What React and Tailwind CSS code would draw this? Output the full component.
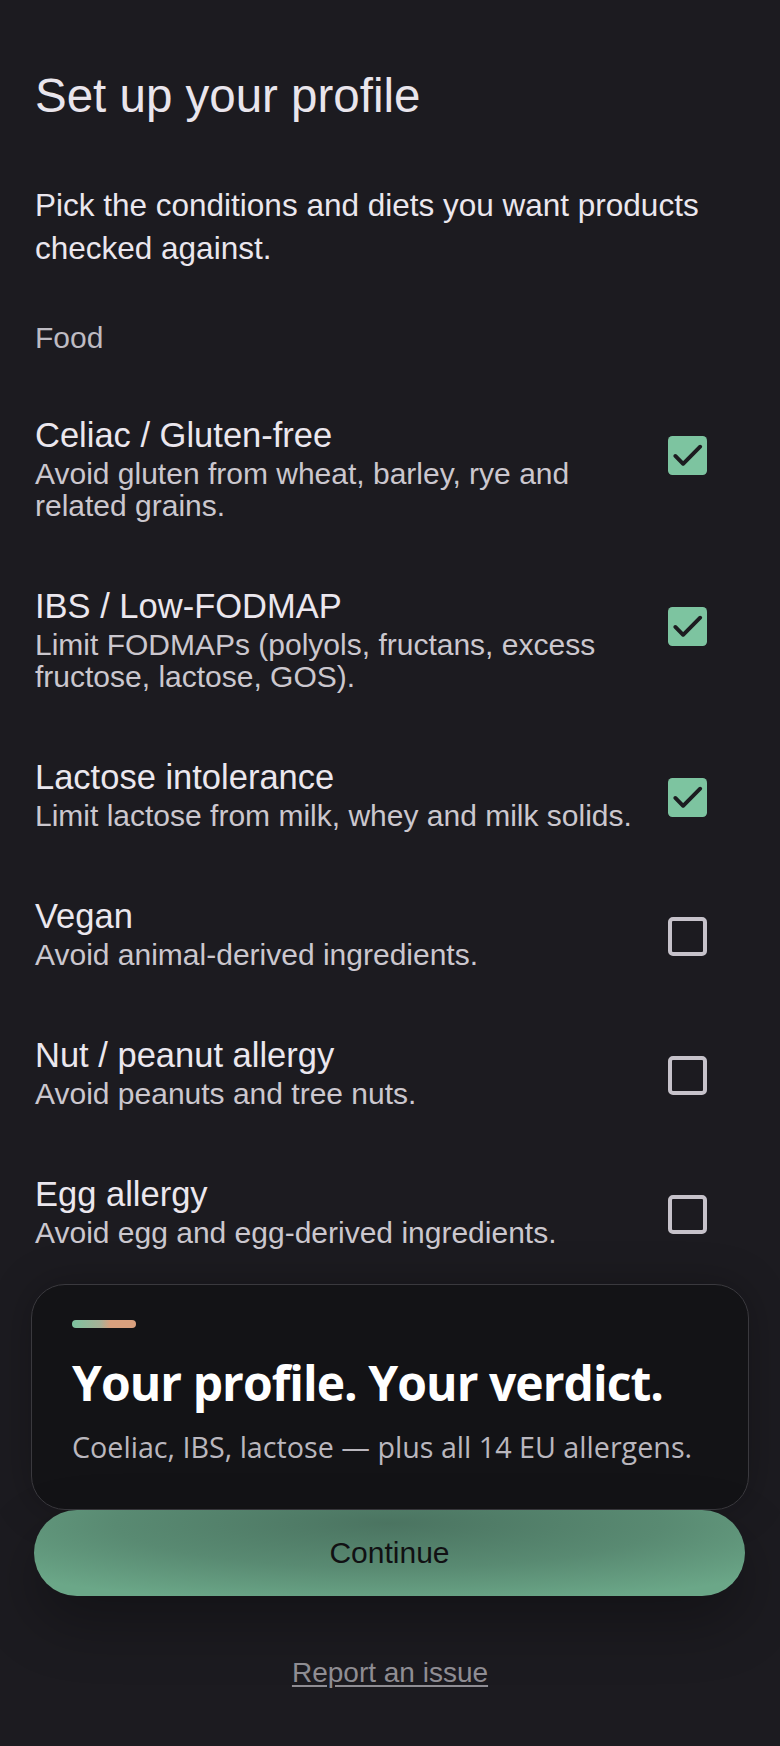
import React from "react";

const items = [
  {
    title: "Celiac / Gluten-free",
    desc: "Avoid gluten from wheat, barley, rye and related grains.",
    checked: true,
  },
  {
    title: "IBS / Low-FODMAP",
    desc: "Limit FODMAPs (polyols, fructans, excess fructose, lactose, GOS).",
    checked: true,
  },
  {
    title: "Lactose intolerance",
    desc: "Limit lactose from milk, whey and milk solids.",
    checked: true,
  },
  {
    title: "Vegan",
    desc: "Avoid animal-derived ingredients.",
    checked: false,
  },
  {
    title: "Nut / peanut allergy",
    desc: "Avoid peanuts and tree nuts.",
    checked: false,
  },
  {
    title: "Egg allergy",
    desc: "Avoid egg and egg-derived ingredients.",
    checked: false,
  },
];

function Checkbox({ checked }) {
  if (checked) {
    return (
      <svg
        width="39"
        height="39"
        viewBox="0 0 40 40"
        className="mt-[23px] shrink-0"
      >
        <rect x="0" y="0" width="40" height="40" rx="4.5" fill="#7dc4a0" />
        <path
          d="M7.5 20.5 L15.5 28.5 L33 11"
          fill="none"
          stroke="#1c1c20"
          strokeWidth="4"
          strokeLinecap="round"
          strokeLinejoin="round"
        />
      </svg>
    );
  }
  return (
    <div className="mt-[23px] h-[39px] w-[39px] shrink-0 rounded-[5px] border-[4px] border-[#c6c2ca]" />
  );
}

export default function App() {
  return (
    <div className="min-h-[1746px] bg-[#1c1b20] pb-[60px] font-['Liberation_Sans',Arial,sans-serif]">
      {/* Header */}
      <div className="px-[35px] pt-[67px]">
        <h1 className="text-[47.5px] font-normal leading-[57.6px] text-[#e9e5ec]">
          Set up your profile
        </h1>
        <p className="mt-[59px] text-[31.5px] leading-[43px] text-[#ebe7ee]">
          Pick the conditions and diets you want products checked against.
        </p>
        <div className="mt-[50px] text-[30px] leading-[36px] text-[#bebbc2]">
          Food
        </div>
      </div>

      {/* Conditions */}
      <ul className="mt-[57px] flex flex-col gap-[62px]">
        {items.map((item) => (
          <li
            key={item.title}
            className="flex items-start justify-between pl-[35px] pr-[73px]"
          >
            <div className="w-[620px]">
              <div className="text-[34.5px] leading-[45px] text-[#ebe7ee]">
                {item.title}
              </div>
              <div className="text-[30px] leading-[32px] text-[#cbc7ce]">
                {item.desc}
              </div>
            </div>
            <Checkbox checked={item.checked} />
          </li>
        ))}
      </ul>

      {/* Promo card */}
      <div className="mx-[31px] mt-[35px] rounded-[34px] border-[1.5px] border-[#3a393e] bg-[#131316] px-[40px] pb-[43px] pt-[35px] shadow-[0_0_40px_rgba(0,0,0,0.25)] font-['Open_Sans','Noto_Sans',sans-serif]">
        <div className="h-[8px] w-[64px] rounded-full bg-[linear-gradient(90deg,#7cc4a0_0%,#a9b096_45%,#d9a07e_60%,#d9a07e_100%)]" />
        <div className="mt-[25px] whitespace-nowrap text-[48px] font-bold leading-[60px] tracking-[-0.02em] text-white">
          Your profile. Your verdict.
        </div>
        <div className="mt-[14px] whitespace-nowrap text-[28.7px] leading-[39px] text-[#bab7be]">
          Coeliac, IBS, lactose — plus all 14 EU allergens.
        </div>
      </div>

      {/* Continue */}
      <button className="mx-[34px] flex h-[86px] w-[711px] items-center justify-center rounded-full bg-[radial-gradient(ellipse_70%_95%_at_50%_15%,#4b7461_0%,#598a72_55%,#6ba788_100%)] text-[30px] text-[#111113] shadow-[0_26px_60px_rgba(0,0,0,0.3)]">
        Continue
      </button>

      <div className="mt-[60px] text-center">
        <a className="text-[28px] leading-[34px] text-[#8f8d93] underline underline-offset-[3px]">
          Report an issue
        </a>
      </div>
    </div>
  );
}
